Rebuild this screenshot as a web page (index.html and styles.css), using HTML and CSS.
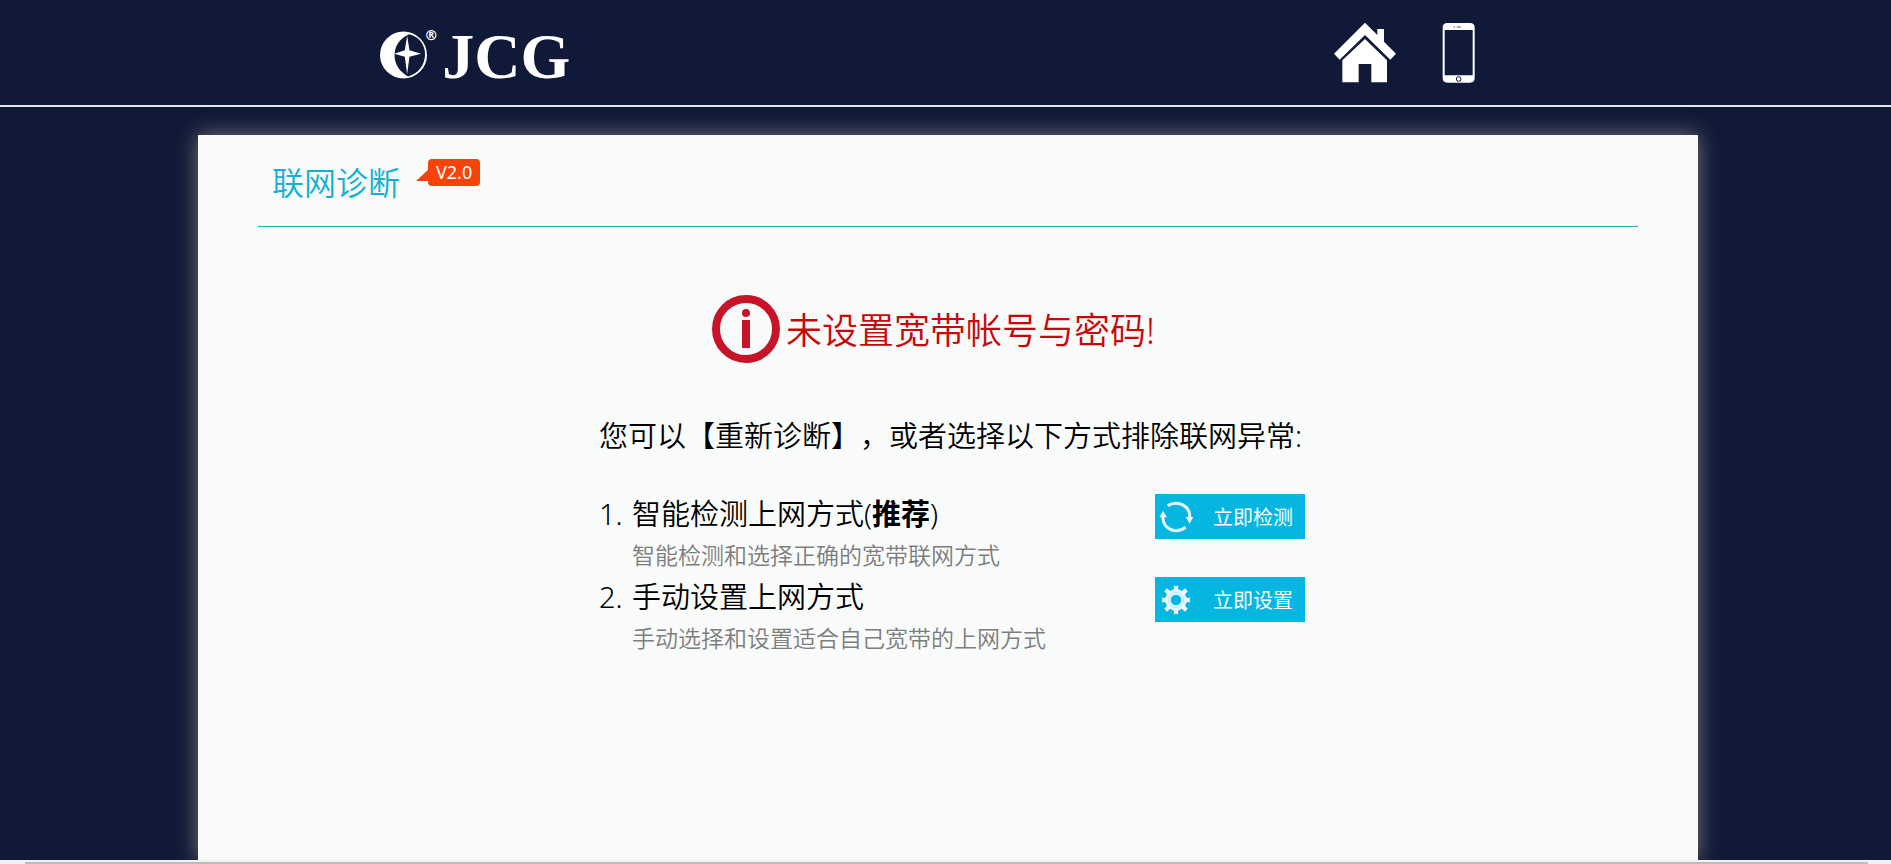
FILE: index.html
```html
<!DOCTYPE html>
<html lang="zh-CN">
<head>
<meta charset="utf-8">
<title>联网诊断</title>
<link rel="stylesheet" href="styles.css">
</head>
<body>
<header class="topbar">
  <a class="logo" href="#" aria-label="JCG">
    <svg class="logo-mark" viewBox="60 64 142 144" aria-hidden="true">
      <circle cx="131" cy="136" r="71" fill="#fff"/>
      <path d="M148 73C178 80 196 104 196 134C196 166 176 192 145 201C118 186 104 164 104 136C104 108 120 86 148 73Z" fill="#101937"/>
      <path d="M142 78L149 122L184 132L149 141L142 194L135 141L103 132L135 122Z" fill="#fff"/>
    </svg>
    <span class="logo-reg">®</span>
    <span class="logo-name">JCG</span>
  </a>
  <nav class="topnav">
    <a href="#" aria-label="首页">
      <svg class="icon-home" viewBox="72 36 186 183" aria-hidden="true">
        <path d="M165 38L202 75V57H222V95L258 131L241 149L165 75L89 149L72 131Z" fill="#fff"/>
        <path d="M165 87L231 151V217H184V162H146V217H97V151Z" fill="#fff"/>
      </svg>
    </a>
    <a href="#" aria-label="手机">
      <svg class="icon-phone" viewBox="396 36 99 183" aria-hidden="true">
        <path d="M412 39H480Q494 39 494 53V204Q494 218 480 218H412Q398 218 398 204V53Q398 39 412 39ZM404 60V196H488V60Z" fill="#fff" fill-rule="evenodd"/>
        <circle cx="446" cy="207" r="7" fill="none" stroke="#101937" stroke-width="3"/>
        <path d="M440 51H453" stroke="#59607a" stroke-width="3"/>
        <circle cx="433" cy="51" r="2" fill="#59607a"/>
      </svg>
    </a>
  </nav>
</header>
<main class="page">
  <section class="card">
    <div class="card-head">
      <h1 class="title">联网诊断</h1>
      <span class="version">V2.0</span>
    </div>
    <div class="content">
      <div class="alert">
        <svg class="icon-info" viewBox="0 0 68 68" aria-hidden="true">
          <circle cx="34" cy="34" r="30" fill="none" stroke="#c81429" stroke-width="8"/>
          <circle cx="34" cy="18" r="4" fill="#c81429"/>
          <path d="M30 25H38V53H30Z" fill="#c81429"/>
        </svg>
        <p class="alert-text">未设置宽带帐号与密码!</p>
      </div>
      <p class="intro">您可以【重新诊断】，或者选择以下方式排除联网异常:</p>
      <ul class="steps">
        <li class="step">
          <span class="num">1.</span>
          <div class="step-body">
            <p class="step-title">智能检测上网方式(<b>推荐</b>)</p>
            <p class="step-note">智能检测和选择正确的宽带联网方式</p>
          </div>
          <button class="action" type="button">
            <svg class="action-icon" viewBox="597 267 102 96" aria-hidden="true">
              <path d="M623 281C656 262 692 283 689 318M677 346C644 370 607 348 609 312" fill="none" stroke="#e8f8fd" stroke-width="9"/>
              <path d="M677 315H700L689 335ZM598 316H621L609 296Z" fill="#e8f8fd"/>
            </svg>
            <span>立即检测</span>
          </button>
        </li>
        <li class="step">
          <span class="num">2.</span>
          <div class="step-body">
            <p class="step-title">手动设置上网方式</p>
            <p class="step-note">手动选择和设置适合自己宽带的上网方式</p>
          </div>
          <button class="action" type="button">
            <svg class="action-icon" viewBox="-51 -48 102 96" aria-hidden="true">
              <g fill="none" stroke="#e8f8fd">
                <circle r="24" stroke-width="16"/>
                <path d="M0-42V-29M0 42V29M-42 0H-29M42 0H29M-31-31L-21-21M31 31L21 21M-31 31L-21 21M31-31L21-21" stroke-width="13"/>
                <circle r="22" stroke="#a5e4f5" stroke-width="3"/>
              </g>
            </svg>
            <span>立即设置</span>
          </button>
        </li>
      </ul>
    </div>
  </section>
</main>
<div class="scroll-strip"><div class="scroll-thumb"></div></div>
</body>
</html>
```
FILE: styles.css
```css
* { box-sizing: border-box; }

body {
  margin: 0;
  height: 100vh;
  display: flex;
  flex-direction: column;
  overflow: hidden;
  background: #101937;
  font-family: "Noto Sans", "Noto Sans CJK SC", sans-serif;
  font-weight: 350;
  text-spacing-trim: space-all;
  color: #000;
}

h1, p, ul { margin: 0; padding: 0; font-weight: inherit; }
ul { list-style: none; }
svg { display: block; }

.topbar {
  flex: none;
  display: flex;
  justify-content: space-between;
  height: 107px;
  padding: 0 22% 0 20%;
  border-bottom: 2px solid #e4e6ee;
}

.logo {
  display: flex;
  align-items: flex-start;
  padding: 31px 0 0 2px;
  color: #fff;
  text-decoration: none;
}
.logo-mark { width: 47px; height: 48px; }
.logo-reg {
  width: 14px;
  margin: -4px 4px 0 -3px;
  font: bold 14px/16px "DejaVu Sans", sans-serif;
}
.logo-name {
  font: bold 64px/52px "Liberation Serif", serif;
}

.topnav {
  display: flex;
  gap: 46px;
  padding-top: 22px;
}
.icon-home { width: 62px; height: 61px; }
.icon-phone { width: 33px; height: 61px; }

.page {
  flex: 1;
  min-height: 0;
  overflow: hidden;
  padding: 28px 193px 0 198px;
}

.card {
  min-height: 100%;
  padding: 0 60px;
  background: #f9fbfa;
  box-shadow: 0 0 20px #77777a;
}

.card-head {
  display: flex;
  align-items: flex-start;
  height: 92px;
  padding: 24px 14px 0;
  border-bottom: 1px solid #2aa5bd;
}
.title {
  font-size: 32px;
  line-height: 48px;
  color: #12b0d2;
}
.version {
  position: relative;
  margin-left: 28px;
  padding: 0 8px;
  border-radius: 4px;
  background: #f7430a;
  color: #fff;
  font-size: 18px;
  font-weight: 400;
  line-height: 27px;
}
.version::before {
  content: "";
  position: absolute;
  left: -12px;
  top: 9px;
  width: 14px;
  height: 13px;
  background: #f7430a;
  clip-path: polygon(0 100%, 100% 0, 100% 100%);
}

.content {
  width: 714px;
  max-width: 100%;
  margin: 68px auto 0;
  padding-left: 8px;
}

.alert {
  display: flex;
  align-items: center;
  gap: 6px;
  padding-left: 113px;
}
.icon-info { width: 68px; height: 68px; }
.alert-text {
  padding-top: 4px;
  font-size: 36px;
  line-height: 64px;
  color: #c8070b;
}

.intro {
  margin-top: 51px;
  font-size: 29px;
  line-height: 44px;
  white-space: nowrap;
}

.steps { margin-top: 34px; }
.step {
  display: flex;
  align-items: flex-start;
}
.num {
  width: 33px;
  font-size: 29px;
  line-height: 43px;
}
.step-body { flex: 1; }
.step-title { font-size: 29px; line-height: 43px; }
.step-title b { font-weight: 700; }
.step-note { font-size: 23px; line-height: 40px; color: #7d7d7d; }

.action {
  display: flex;
  align-items: center;
  justify-content: space-between;
  width: 150px;
  height: 45px;
  margin-top: 2px;
  padding: 0 12px 0 4px;
  border: 0;
  background: #05b6e1;
  color: #fff;
  font-family: inherit;
  font-size: 20px;
  font-weight: 400;
}
.action-icon { width: 34px; height: 32px; }

.scroll-strip {
  flex: none;
  height: 4px;
  padding: 2px 23px 0 25px;
  background: #f1f2f2;
}
.scroll-thumb { height: 2px; background: #bcbdbc; }
```
